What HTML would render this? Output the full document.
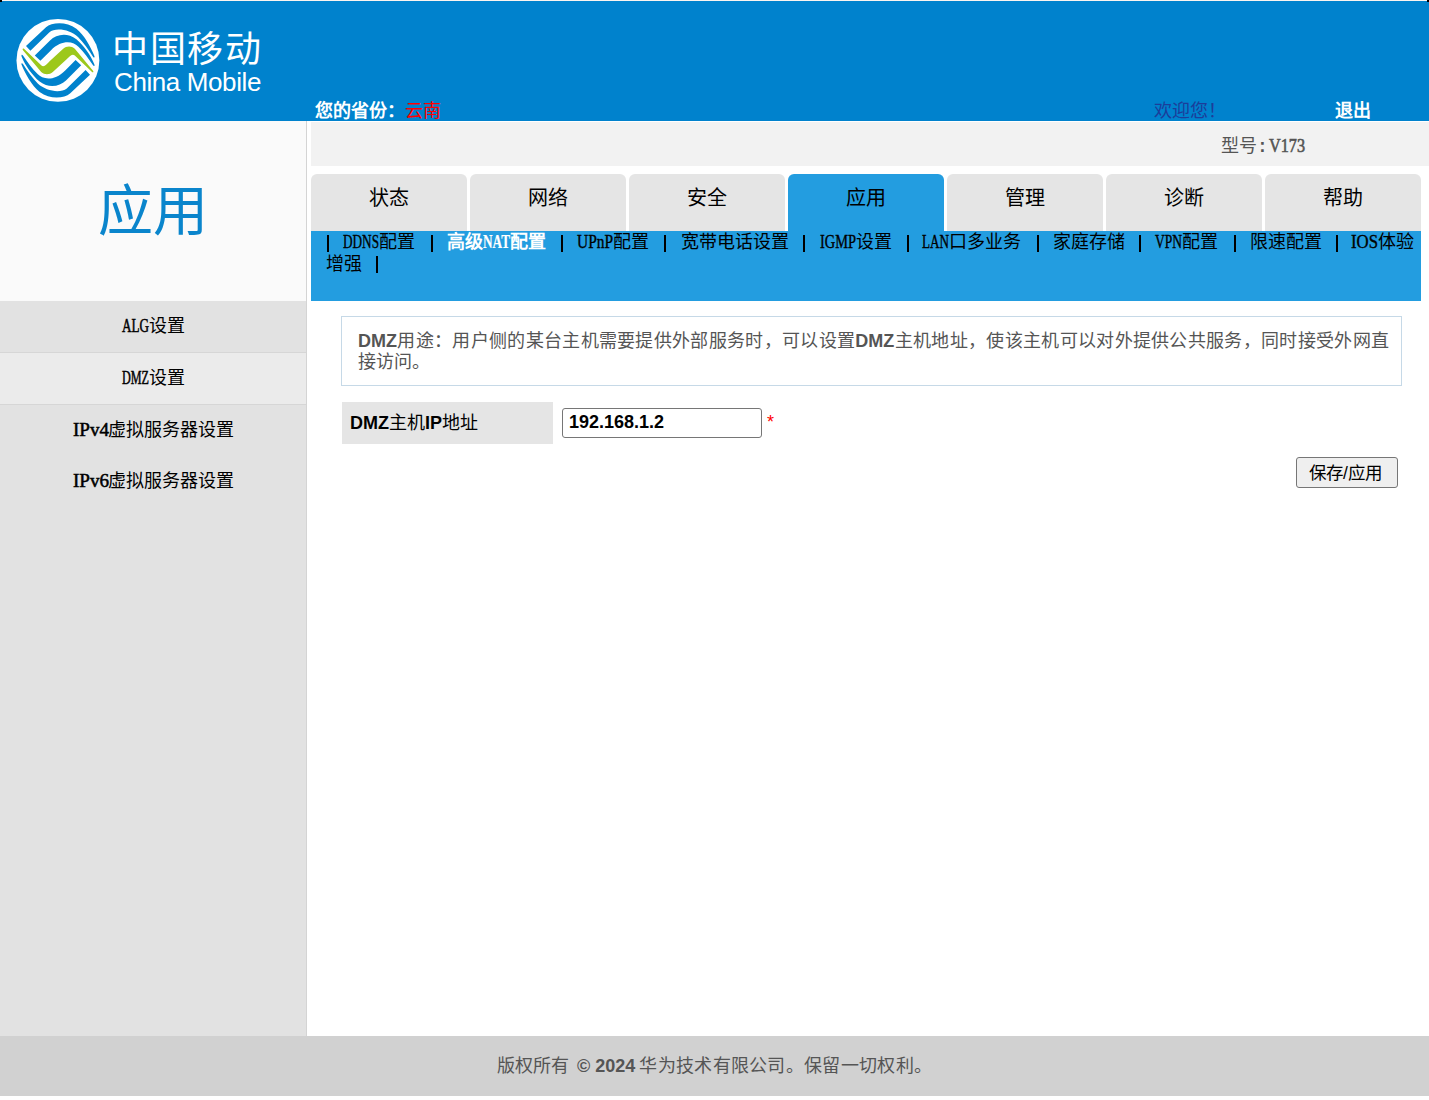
<!DOCTYPE html>
<html lang="zh-CN">
<head>
<meta charset="utf-8">
<style>
html,body{margin:0;padding:0;}
body{width:1429px;height:1100px;position:relative;overflow:hidden;background:#fff;font-family:"Liberation Serif",serif;font-size:18px;color:#000;}
.a{position:absolute;white-space:nowrap;}
.m{font-family:"Liberation Mono",monospace;font-size:18px;letter-spacing:-1.8px;}
.s{font-family:"Liberation Sans",sans-serif;}
.w{display:inline-block;white-space:nowrap;}
.w i{font-style:normal;display:inline-block;transform-origin:0 0;font-family:"Liberation Serif",serif;font-weight:normal;-webkit-text-stroke:0.35px currentColor;}
.si .w i{-webkit-text-stroke:0.5px currentColor;}
#mdl .w i{-webkit-text-stroke:0.6px currentColor;}
#mdl .m{font-weight:bold;}
.act .w i{font-weight:bold;-webkit-text-stroke:0.2px currentColor;}
#hdr{position:absolute;left:0;top:1px;width:1429px;height:120px;background:#0082cd;}
#topline{position:absolute;left:0;top:0;width:1429px;height:1px;background:#fbf4f0;}
#side{position:absolute;left:0;top:121px;width:306px;height:915px;background:#e2e2e2;border-right:1px solid #d4d4d4;}
#sidetitle{position:absolute;left:0;top:0;width:306px;height:180px;background:#fafafa;}
.si{position:absolute;left:0;width:306px;height:51px;text-align:center;font-weight:500;line-height:51px;}
#model{position:absolute;left:311px;top:122px;width:1118px;height:44px;background:#f2f2f2;}
.tab{position:absolute;top:174px;width:156px;height:57px;background:#e5e5e5;border-radius:6px 6px 0 0;text-align:center;font-size:20px;line-height:48px;}
.tab.on{background:#239de0;}
.si2{top:1px;line-height:21px;}
.bar{position:absolute;width:2px;height:17px;background:#000;}
#sub{position:absolute;left:311px;top:231px;width:1110px;height:70px;background:#239de0;font-weight:500;}
#info{position:absolute;left:341px;top:316px;width:1059px;height:68px;border:1px solid #c6d9e7;}
#lbl{position:absolute;left:342px;top:402px;width:211px;height:42px;background:#e5e5e5;}
#ipt{position:absolute;left:562px;top:408px;width:198px;height:28px;border:1px solid #767676;border-radius:3px;background:#fff;}
#btn{position:absolute;left:1296px;top:457px;width:100px;height:29px;border:1px solid #767676;border-radius:3px;background:#efefef;}
#foot{position:absolute;left:0;top:1036px;width:1429px;height:60px;background:#d1d1d1;}
</style>
</head>
<body>
<div id="topline"></div>
<div class="a" style="left:0;top:0;width:2px;height:2px;background:#000;z-index:5"></div>
<div class="a" style="left:1427px;top:0;width:2px;height:2px;background:#000;z-index:5"></div>
<div id="hdr"></div>
<svg class="a" style="left:14px;top:16px" width="88" height="88" viewBox="0 0 1100 1100">
  <circle cx="549" cy="555" r="518" fill="#fff"/>
  <g fill="#0082cd">
    <path id="bA" d="M150,375 L400,140 C470,80 650,60 780,160 C880,240 960,390 1005,500 C1012,518 1000,526 990,512 C930,420 870,330 800,262 C700,170 520,140 440,205 L205,435 Z"/>
    <path id="bB" d="M260,495 L450,305 C530,230 660,200 780,290 C870,370 960,490 1005,605 C1012,625 998,632 988,615 C930,530 870,445 805,384 C740,315 600,290 460,430 L330,560 Z"/>
    <use href="#bA" transform="rotate(180 550 555)"/>
    <use href="#bB" transform="rotate(180 550 555)"/>
  </g>
  <path fill="#9dc81b" d="M125,410 L340,615 C375,650 410,600 445,566 L615,410 C655,375 715,370 760,410 L985,680 C1000,695 990,712 975,700 L760,495 C725,460 690,510 655,544 L485,700 C445,735 385,740 340,700 L115,430 C100,415 110,398 125,410 Z"/>
</svg>
<div class="a" id="cmcn" style="left:112px;top:25px;font-family:'Liberation Sans',sans-serif;font-size:36px;line-height:50px;color:#fff;font-weight:400;letter-spacing:1.6px;">中国移动</div>
<div class="a" id="cmen" style="left:114px;top:65px;font-family:'Liberation Sans',sans-serif;font-size:26px;line-height:34px;color:#fff;letter-spacing:-0.4px;">China Mobile</div>
<div class="a" id="prov" style="left:315px;top:100px;line-height:22px;color:#fff;font-weight:bold;">您的省份：<span style="color:#f00;font-weight:normal">云南</span></div>
<div class="a" id="welc" style="left:1154px;top:100px;line-height:22px;color:#1c3d9a;">欢迎您！</div>
<div class="a" id="quit" style="left:1335px;top:100px;line-height:22px;color:#fff;font-weight:bold;">退出</div>
<div id="side">
  <div id="sidetitle"><div class="a" id="apptitle" style="left:98px;top:56px;font-size:55px;line-height:70px;color:#0a85cc;font-weight:500;">应用</div></div>
  <div class="si" style="top:180px;border-bottom:1px solid #d6d6d6;"><span class="w" style="width:27px"><i style="transform:scaleX(0.7297)">ALG</i></span>设置</div>
  <div class="si" style="top:232px;background:#ebebeb;border-bottom:1px solid #d6d6d6;"><span class="w" style="width:27px"><i style="transform:scaleX(0.6750)">DMZ</i></span>设置</div>
  <div class="si" style="top:284px;"><span class="w" style="width:36px"><i style="transform:scaleX(1.0583)">IPv4</i></span>虚拟服务器设置</div>
  <div class="si" style="top:335px;"><span class="w" style="width:36px"><i style="transform:scaleX(1.0583)">IPv6</i></span>虚拟服务器设置</div>
</div>
<div id="model"><div class="a" id="mdl" style="left:910px;top:13px;line-height:22px;color:#555;font-weight:500;">型号<span class="m">:</span><span class="w" style="width:36px;margin-left:3px"><i style="transform:scaleX(0.9000)">V173</i></span></div></div>
<div class="tab" style="left:311px">状态</div>
<div class="tab" style="left:470px">网络</div>
<div class="tab" style="left:629px">安全</div>
<div class="tab on" style="left:788px">应用</div>
<div class="tab" style="left:947px">管理</div>
<div class="tab" style="left:1106px">诊断</div>
<div class="tab" style="left:1265px">帮助</div>
<div id="sub">
<div class="a si2" style="left:32px"><span class="w" style="width:36px"><i style="transform:scaleX(0.7345)">DDNS</i></span>配置</div>
<div class="a si2 act" style="left:136px;color:#fff;font-weight:bold">高级<span class="w" style="width:27px"><i style="transform:scaleX(0.7363)">NAT</i></span>配置</div>
<div class="a si2" style="left:266px"><span class="w" style="width:36px"><i style="transform:scaleX(0.8565)">UPnP</i></span>配置</div>
<div class="a si2" style="left:370px">宽带电话设置</div>
<div class="a si2" style="left:509px"><span class="w" style="width:36px"><i style="transform:scaleX(0.7997)">IGMP</i></span>设置</div>
<div class="a si2" style="left:611px"><span class="w" style="width:27px"><i style="transform:scaleX(0.7297)">LAN</i></span>口多业务</div>
<div class="a si2" style="left:742px">家庭存储</div>
<div class="a si2" style="left:844px"><span class="w" style="width:27px"><i style="transform:scaleX(0.7497)">VPN</i></span>配置</div>
<div class="a si2" style="left:939px">限速配置</div>
<div class="a si2" style="left:1040px"><span class="w" style="width:27px"><i style="transform:scaleX(0.9305)">IOS</i></span>体验</div>
<div class="bar" style="left:16px;top:4px"></div>
<div class="bar" style="left:120px;top:4px"></div>
<div class="bar" style="left:250px;top:4px"></div>
<div class="bar" style="left:353px;top:4px"></div>
<div class="bar" style="left:492px;top:4px"></div>
<div class="bar" style="left:596px;top:4px"></div>
<div class="bar" style="left:726px;top:4px"></div>
<div class="bar" style="left:828px;top:4px"></div>
<div class="bar" style="left:923px;top:4px"></div>
<div class="bar" style="left:1025px;top:4px"></div>
<div class="a si2" style="left:15px;top:23px">增强</div>
<div class="bar" style="left:65px;top:25px"></div>
</div>
<div id="info">
<div class="a" id="inf1" style="left:16px;top:14px;width:1031px;white-space:normal;text-align:justify;text-align-last:justify;line-height:21px;color:#555;font-weight:500;"><b class="s">DMZ</b>用途：用户侧的某台主机需要提供外部服务时，可以设置<b class="s">DMZ</b>主机地址，使该主机可以对外提供公共服务，同时接受外网直</div>
<div class="a" id="inf2" style="left:16px;top:35px;line-height:21px;color:#555;font-weight:500;">接访问。</div>
</div>
<div id="lbl"><div class="a" id="lbltxt" style="left:8px;top:10px;line-height:22px;"><b class="s">DMZ</b>主机<b class="s">IP</b>地址</div></div>
<div id="ipt"><div class="a s" id="ipv" style="left:6px;top:2px;line-height:22px;font-weight:bold;">192.168.1.2</div></div>
<div class="a s" id="star" style="left:767px;top:411px;line-height:22px;color:#f00;">*</div>
<div id="btn"><div class="a s" id="btntxt" style="left:12px;top:4px;line-height:22px;font-size:17.5px;">保存/应用</div></div>
<div id="foot"><div class="a" id="ftxt" style="left:497px;top:19px;line-height:22px;color:#555;font-weight:500;">版权所有<b class="s" style="margin-left:8px">©</b><b class="s" style="margin-left:5px">2024</b><span style="margin-left:4px;letter-spacing:0.3px">华为技术有限公司。保留一切权利。</span></div></div>
</body>
</html>
